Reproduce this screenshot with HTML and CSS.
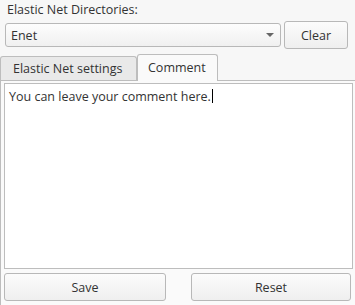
FILE: index.html
```html
<!DOCTYPE html>
<html>
<head>
    <title>Elastic Net</title>
    <link rel="stylesheet" href="styles.css">
</head>
<body>
    <div class="dir-label">Elastic Net Directories:</div>

    <div class="dir-row">
        <div class="combo">
            <span>Enet</span>
            <span class="arrow"></span>
        </div>
        <button class="btn clear-btn">Clear</button>
    </div>

    <div class="tabs">
        <div class="tab">Elastic Net settings</div>
        <div class="tab active">Comment</div>
    </div>

    <div class="pane">
        <div class="comment">You can leave your comment here.<span class="caret"></span></div>
        <div class="actions">
            <button class="btn save-btn">Save</button>
            <button class="btn reset-btn">Reset</button>
        </div>
    </div>
</body>
</html>
```

FILE: styles.css
```css
body {
    margin: 0;
    width: 355px;
    height: 305px;
    overflow: hidden;
    background: #f7f7f7;
    color: #333;
    font-family: "Open Sans", "DejaVu Sans", sans-serif;
    font-size: 12.5px;
}
.dir-label {
    height: 21px;
    padding-left: 7px;
    line-height: 20px;
}
.dir-row {
    display: flex;
    align-items: center;
    height: 28px;
    padding-left: 5px;
}
.combo {
    box-sizing: border-box;
    width: 276px;
    height: 24px;
    display: flex;
    align-items: center;
    justify-content: space-between;
    padding: 0 6px 0 5px;
    border: 1px solid #b8b8b8;
    border-radius: 3px;
    background: linear-gradient(#fdfdfd, #f0f0f0);
}
.arrow {
    width: 0;
    height: 0;
    border-left: 4px solid transparent;
    border-right: 4px solid transparent;
    border-top: 4px solid #666;
}
.btn {
    box-sizing: border-box;
    height: 28px;
    border: 1px solid #b8b8b8;
    border-radius: 3px;
    background: linear-gradient(#fcfcfc, #efefef);
    color: #333;
    font: inherit;
    padding: 0;
}
.clear-btn {
    width: 64px;
    margin-left: 3px;
}
.tabs {
    display: flex;
    align-items: flex-end;
    height: 26px;
    margin-top: 5px;
}
.tab {
    box-sizing: border-box;
    height: 24px;
    width: 137px;
    padding-left: 12px;
    line-height: 23px;
    border: 1px solid #bdbdbd;
    border-bottom: none;
    border-radius: 3px 3px 0 0;
    background: #e9e9e9;
}
.tab.active {
    height: 27px;
    width: 81px;
    margin-bottom: -1px;
    padding-left: 10px;
    line-height: 25px;
    background: #fafafa;
    position: relative;
}
.pane {
    height: 225px;
    border-top: 1px solid #bdbdbd;
    border-left: 1px solid #bdbdbd;
    padding: 2px 2px 0 3px;
    background: #fafafa;
}
.comment {
    box-sizing: border-box;
    height: 186px;
    border: 1px solid #bdbdbd;
    background: #fff;
    padding: 3px 4px;
    line-height: 19px;
}
.caret {
    display: inline-block;
    width: 1px;
    height: 14px;
    margin-left: 1px;
    vertical-align: -2px;
    background: #000;
}
.actions {
    display: flex;
    margin-top: 4px;
}
.save-btn {
    width: 162px;
}
.reset-btn {
    width: 160px;
    margin-left: 25px;
}
```
